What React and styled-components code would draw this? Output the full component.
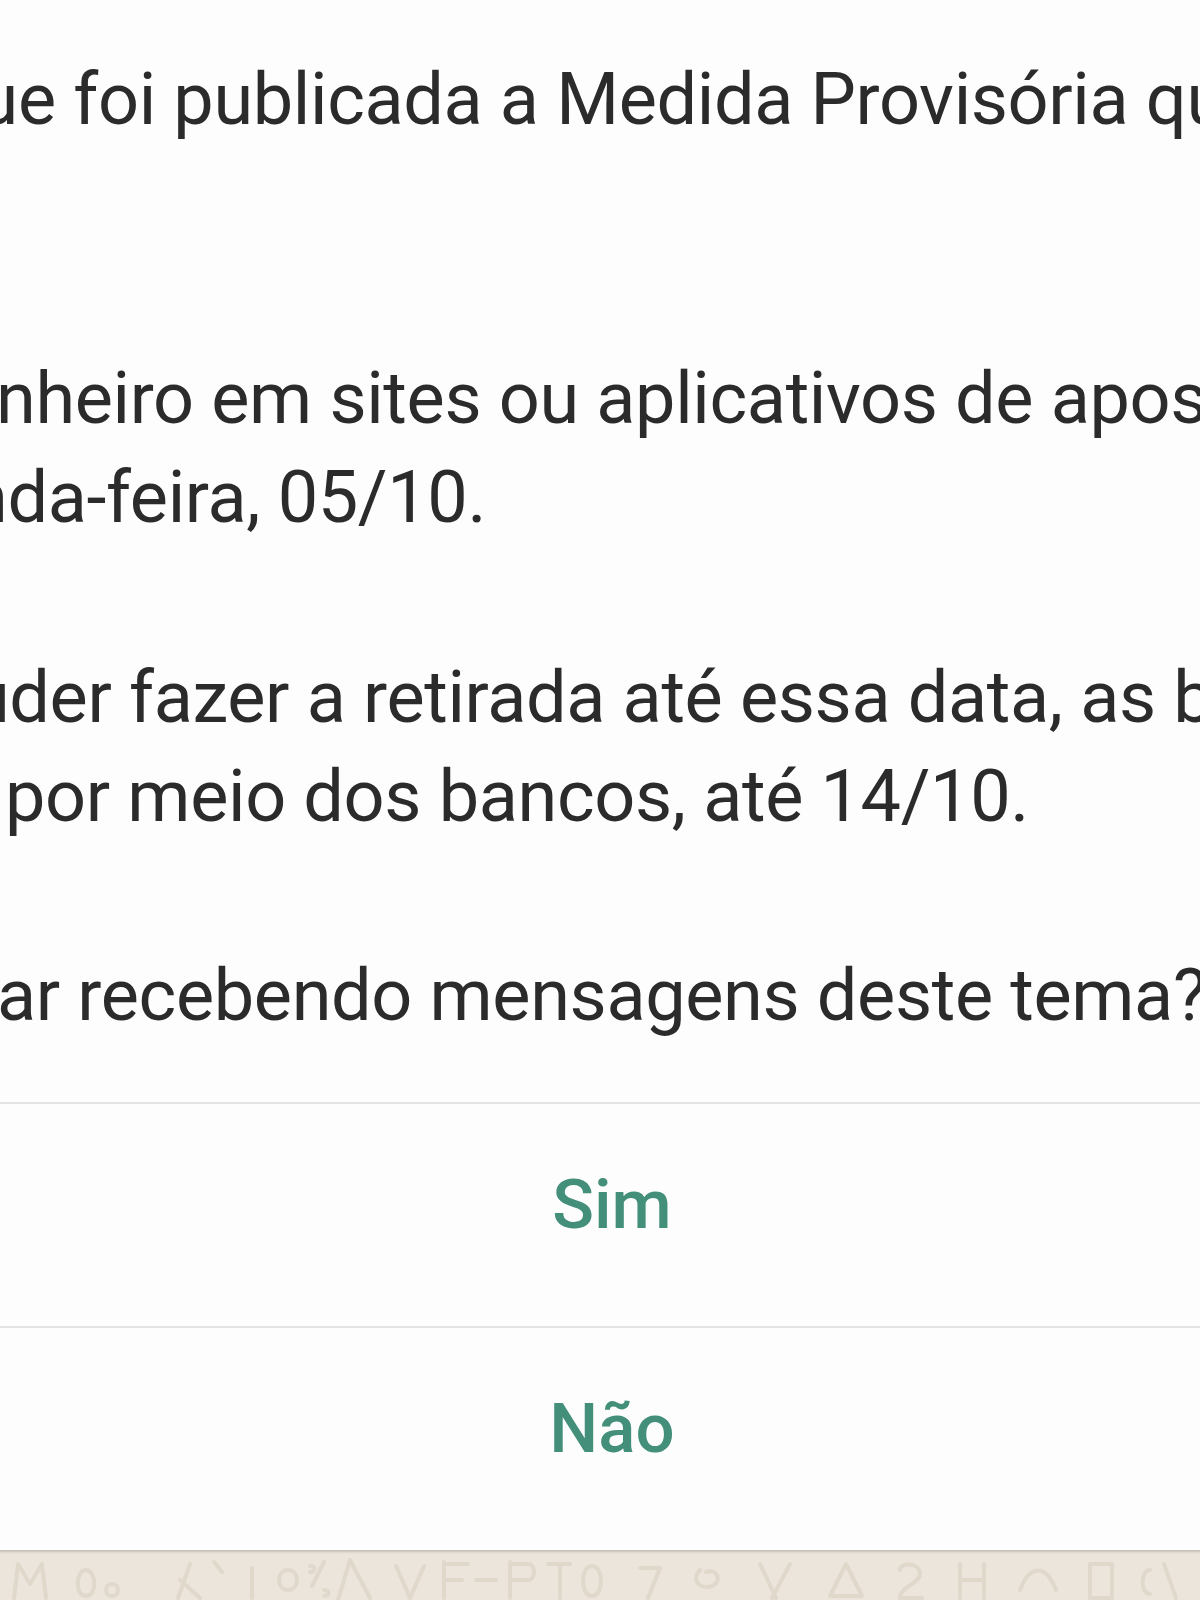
import React from "react";
import styled, { createGlobalStyle } from "styled-components";

const GlobalStyle = createGlobalStyle`
  html, body {
    margin: 0;
    padding: 0;
    background: #ece5dc;
  }
  #root {
    height: 1600px;
  }
`;

const paragraphs = [
  {
    gap: 2,
    lines: [{ text: "que foi publicada a Medida Provisória que", shift: -62 }],
  },
  {
    gap: 1,
    lines: [
      { text: "nheiro em sites ou aplicativos de apostas", shift: -4 },
      { text: "nda-feira, 05/10.", shift: -32 },
    ],
  },
  {
    gap: 1,
    lines: [
      { text: "uder fazer a retirada até essa data, as bets", shift: -30 },
      { text: "por meio dos bancos, até 14/10.", shift: 5 },
    ],
  },
  {
    gap: 0,
    lines: [{ text: "ar recebendo mensagens deste tema?", shift: -3 }],
  },
];

const App = () => {
  return (
    <Page>
      <GlobalStyle />
      <Bubble>
        <Message>
          {paragraphs.map((p, i) => (
            <Paragraph key={i} $gap={p.gap}>
              {p.lines.map((l, j) => (
                <Line key={j} $shift={l.shift}>
                  {l.text}
                </Line>
              ))}
            </Paragraph>
          ))}
        </Message>
        <Reply>Sim</Reply>
        <Reply>Não</Reply>
      </Bubble>
      <Wallpaper>
        <svg width="1200" height="50" viewBox="0 0 1200 50">
          <g
            fill="none"
            stroke="#ddd3c6"
            strokeWidth="4"
            strokeLinecap="round"
            strokeLinejoin="round"
          >
            <path d="M14 48 L18 14 L30 34 L42 14 L46 48" />
            <path d="M86 20 C76 20 74 46 86 46 C98 46 96 20 86 20 Z" />
            <path d="M112 34 C104 34 104 46 112 46 C120 46 120 34 112 34" />
            <path d="M190 14 L178 48 M180 30 L200 48" />
            <path d="M214 12 L222 22" />
            <path d="M252 18 L252 48" />
            <path d="M288 20 C276 20 276 40 288 40 C300 40 300 20 288 20 Z" />
            <path d="M312 36 L324 12 M310 16 C316 16 316 22 310 22 M324 40 C330 40 330 46 324 46" />
            <path d="M338 50 L350 10 L370 48" />
            <path d="M396 16 L410 48 L424 16" />
            <path d="M444 12 L444 48 M444 14 L468 14 M444 30 L462 30" />
            <path d="M476 30 L496 30" />
            <path d="M510 12 L510 48 M510 14 L528 14 C536 14 536 30 528 30 L510 30" />
            <path d="M548 14 L570 14 M560 14 L560 48" />
            <path d="M592 16 C580 16 580 46 592 46 C604 46 604 16 592 16 Z" />
            <path d="M640 18 L660 18 L648 48" />
            <path d="M700 20 C690 30 700 40 712 36 C722 32 718 18 706 22" />
            <path d="M760 14 L776 48 M790 14 L772 48" />
            <path d="M830 46 L846 14 L862 46 Z" />
            <path d="M900 20 C900 12 920 12 920 24 C920 34 900 36 900 48 L922 48" />
            <path d="M960 14 L960 48 M960 30 L984 30 M984 14 L984 48" />
            <path d="M1020 40 C1030 14 1046 14 1056 40" />
            <path d="M1090 14 L1112 14 L1112 48 L1090 48 Z" />
            <path d="M1150 20 C1140 20 1140 44 1150 44 M1164 14 L1176 48" />
          </g>
        </svg>
      </Wallpaper>
    </Page>
  );
};

export default App;

const Page = styled.div`
  width: 1200px;
  height: 1600px;
  overflow: hidden;
  background: #ece5dc;
  display: flex;
  flex-direction: column;
`;

const Bubble = styled.div`
  width: 1824px;
  margin-left: -300px;
  background: #fdfdfd;
  box-shadow: 0 2px 2px rgba(0, 0, 0, 0.16);
  display: flex;
  flex-direction: column;
  flex-shrink: 0;
  position: relative;
  z-index: 1;
`;

const Message = styled.div`
  padding: 50px 0 56px 300px;
  font-family: Roboto, "Liberation Sans", sans-serif;
  font-size: 72px;
  line-height: 99.6px;
  letter-spacing: -0.35px;
  color: #2b2b2b;
`;

const Paragraph = styled.div`
  margin-bottom: ${(p) => p.$gap * 99.6}px;
`;

const Line = styled.div`
  white-space: nowrap;
  margin-left: ${(p) => p.$shift}px;
`;

const Reply = styled.div`
  box-sizing: border-box;
  height: 224px;
  padding-bottom: 20px;
  border-top: 2px solid #e4e4e4;
  display: flex;
  align-items: center;
  justify-content: center;
  font-family: Roboto, "Liberation Sans", sans-serif;
  font-weight: 500;
  font-size: 69px;
  color: #438f7a;
`;

const Wallpaper = styled.div`
  flex: 1;
  background: #ece5dc;
  svg {
    display: block;
    opacity: 0.7;
  }
`;
